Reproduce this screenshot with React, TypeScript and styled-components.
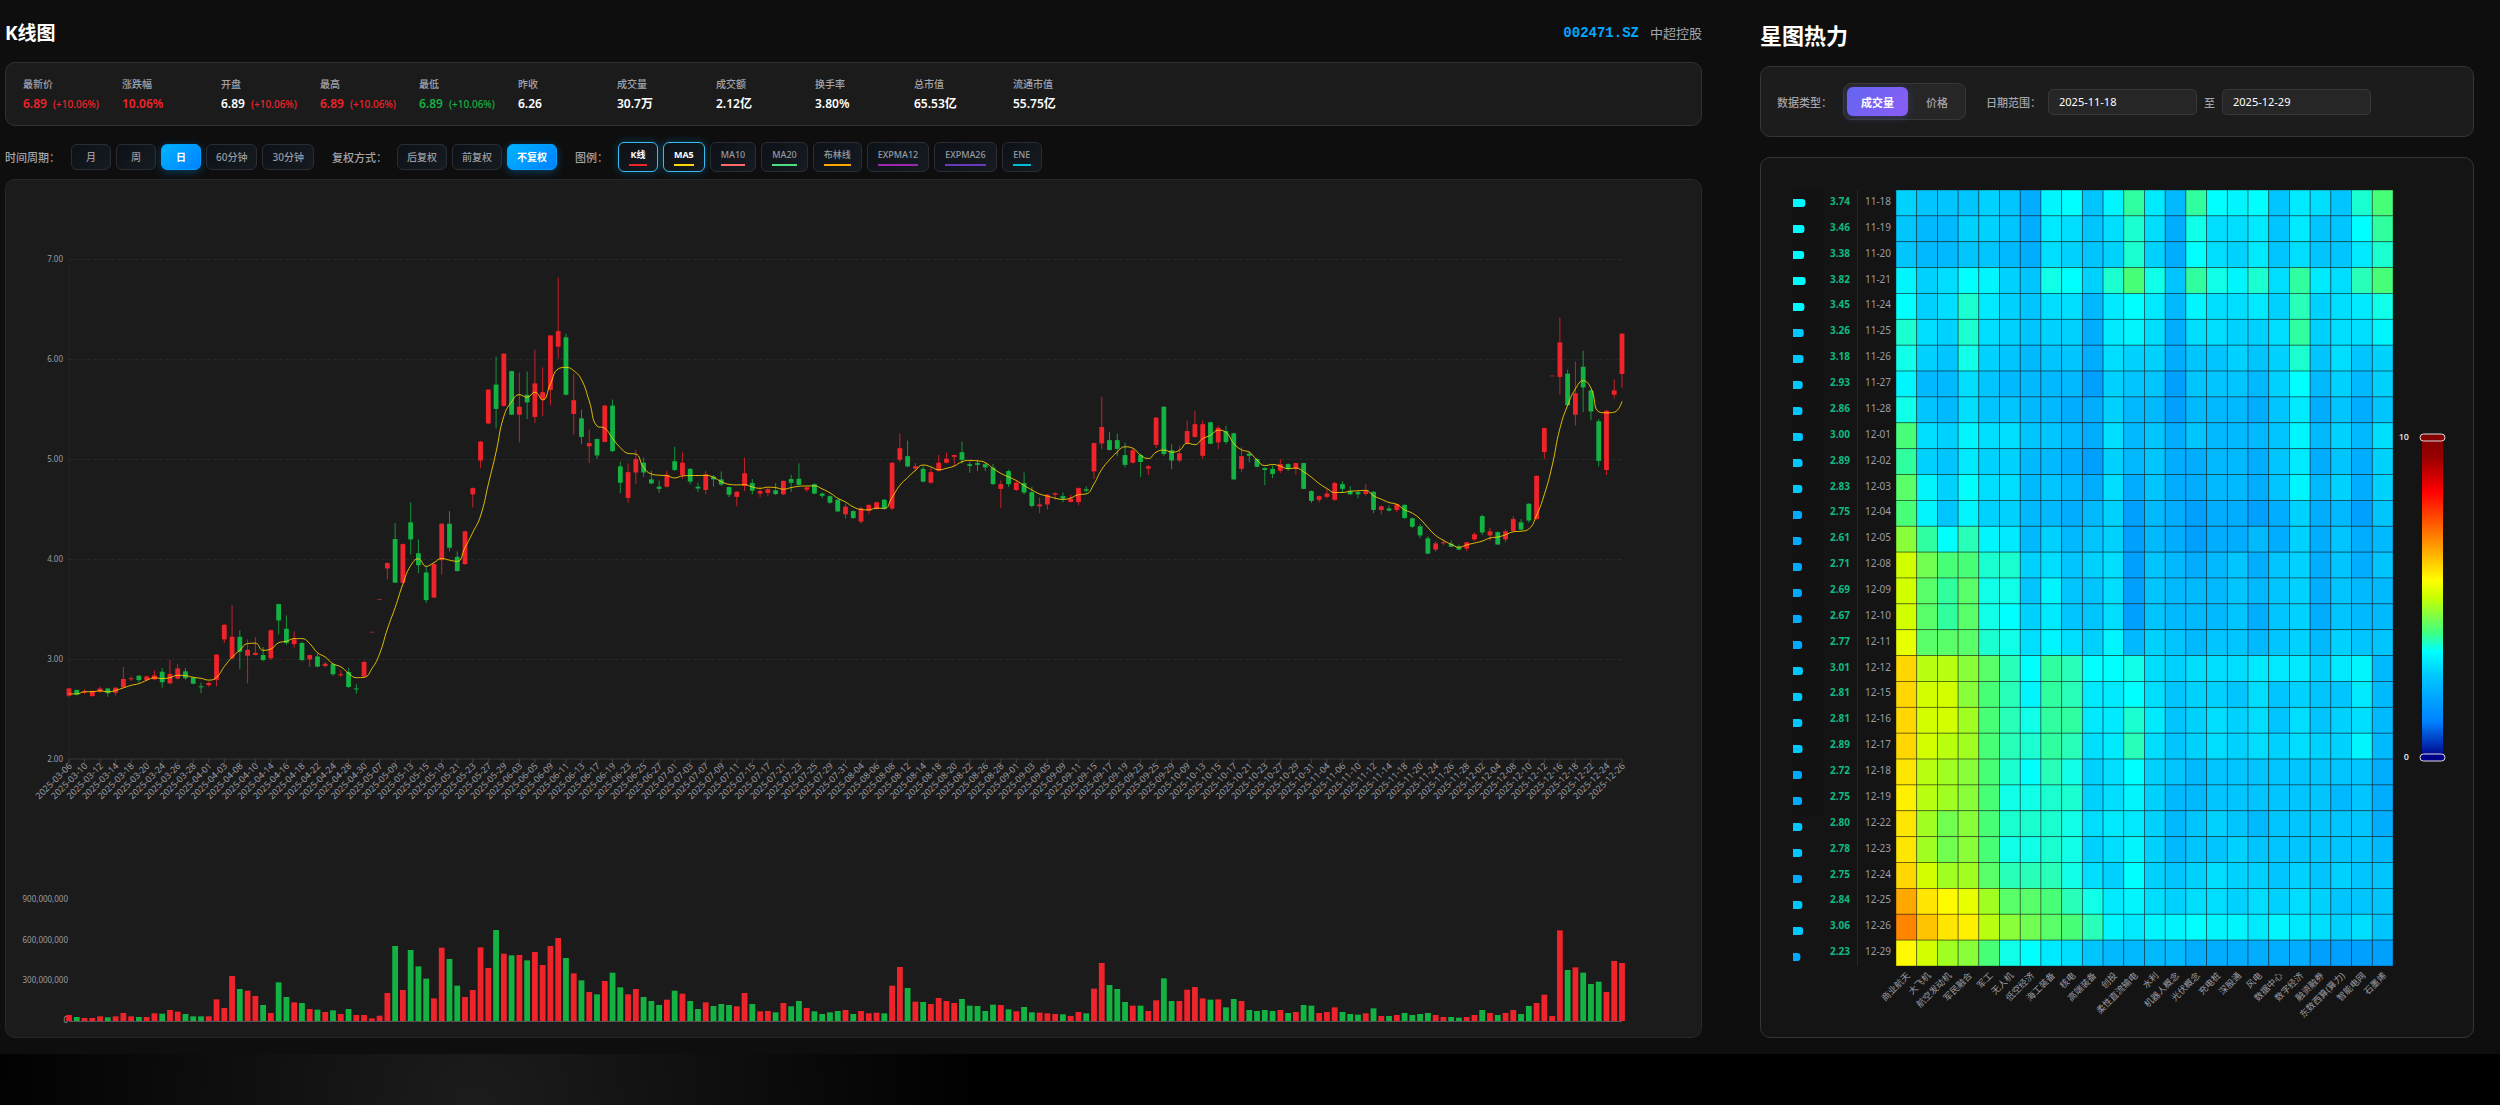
import React, { useState } from 'react';
import styled, { createGlobalStyle, css } from 'styled-components';

const SANS = '"Noto Sans", "Noto Sans CJK SC", sans-serif';
const UP = '#ef232a';
const DOWN = '#14b143';
const MUTED = '#a3a3aa';
const AXIS_TEXT = '#9c9ca2';

const GlobalStyle = createGlobalStyle`
  *, *::before, *::after { box-sizing: border-box; }
  body {
    margin: 0;
    min-height: 100vh;
    font-family: ${SANS};
    color: #fff;
    background: radial-gradient(circle 510px at 19% 100%, #1c1c1c, #000) #000;
  }
  button, input { font-family: inherit; }
`;

/* ---------- layout ---------- */

const Dashboard = styled.main`
  display: grid;
  grid-template-columns: minmax(0, 1697fr) minmax(0, 714fr);
  column-gap: 58px;
  padding: 0 26px 16px 5px;
  background: #0e0e0e;
`;

const Panel = styled.section`
  display: flex;
  flex-direction: column;
`;

const PanelHeader = styled.header<{ $height: number }>`
  display: flex;
  align-items: center;
  justify-content: space-between;
  height: ${p => p.$height}px;
  padding-top: 4px;
`;

const Title = styled.h1<{ $size: number }>`
  margin: 0;
  font-size: ${p => p.$size}px;
  line-height: 28px;
  font-weight: 700;
`;

const Stock = styled.div`
  display: flex;
  align-items: center;
  gap: 11px;
  font-size: 13px;
  line-height: 20px;
  color: ${MUTED};
`;

const StockCode = styled.span`
  font-family: "Liberation Mono", monospace;
  font-size: 14px;
  font-weight: 700;
  color: #00a8ff;
`;

const Card = styled.div<{ $border: string; $bg: string }>`
  border: 1px solid ${p => p.$border};
  border-radius: 10px;
  background: ${p => p.$bg};
`;

/* ---------- quote summary ---------- */

const StatsCard = styled(Card)`
  padding: 12px 17px 11px;
`;

const StatList = styled.dl`
  display: grid;
  grid-template-columns: repeat(11, 99px);
  margin: 0;
`;

const Stat = styled.div`
  display: flex;
  flex-direction: column;
  white-space: nowrap;
`;

const StatLabel = styled.dt`
  font-size: 10px;
  line-height: 19px;
  font-weight: 500;
  color: ${MUTED};
`;

const StatValue = styled.dd<{ $color: string }>`
  margin: 0;
  font-size: 12px;
  line-height: 19px;
  font-weight: 600;
  color: ${p => p.$color};
`;

const Change = styled.span<{ $color: string }>`
  margin-left: 6px;
  font-size: 10px;
  font-weight: 500;
  color: ${p => p.$color};
`;

/* ---------- toolbar ---------- */

const Toolbar = styled.div`
  display: flex;
  align-items: center;
  gap: 18px;
  height: 53px;
  padding-top: 12px;
  padding-bottom: 4px;
`;

const Group = styled.div`
  display: flex;
  align-items: center;
  gap: 5px;
`;

const GroupLabel = styled.span<{ $width: number }>`
  width: ${p => p.$width}px;
  font-size: 11px;
  font-weight: 500;
  color: ${MUTED};
  white-space: nowrap;
`;

const chip = css`
  border: 1px solid #2a2e34;
  border-radius: 6px;
  background: linear-gradient(135deg, #0d1117, #161b22);
  color: #989aa0;
  line-height: 14px;
  font-weight: 500;
  white-space: nowrap;
  cursor: pointer;
`;

const ChoiceButton = styled.button<{ $active: boolean }>`
  ${chip}
  min-width: 40px;
  height: 26px;
  padding: 0 9px;
  font-size: 10px;
  ${p => p.$active && css`
    border-color: #00a2ff;
    background: linear-gradient(135deg, #00b4ff, #0080ff);
    box-shadow: 0 2px 8px rgba(0, 150, 255, 0.35);
    color: #fff;
    font-weight: 700;
  `}
`;

const LegendButton = styled.button<{ $active: boolean }>`
  ${chip}
  display: flex;
  flex-direction: column;
  align-items: center;
  justify-content: center;
  gap: 2px;
  min-width: 40px;
  height: 30px;
  padding: 0 10px;
  font-size: 9px;
  ${p => p.$active && css`
    border-color: #38bdf0;
    box-shadow: 0 0 8px rgba(0, 180, 255, 0.3);
    color: #fff;
    font-weight: 700;
  `}
`;

const Swatch = styled.span<{ $color: string }>`
  width: 100%;
  min-width: 18px;
  height: 2px;
  background: ${p => p.$color};
`;

/* ---------- heat map controls ---------- */

const FilterCard = styled(Card)`
  display: flex;
  align-items: center;
  gap: 20px;
  padding: 16px;
  margin-bottom: 20px;
`;

const FilterLabel = styled.span`
  font-size: 11px;
  font-weight: 500;
  color: ${MUTED};
  white-space: nowrap;
`;

const Field = styled.div<{ $gap: number }>`
  display: flex;
  align-items: center;
  gap: ${p => p.$gap}px;
`;

const Segmented = styled.div`
  display: flex;
  gap: 4px;
  padding: 3px;
  border: 1px solid #383838;
  border-radius: 8px;
  background: #262626;
`;

const Segment = styled.button<{ $active: boolean }>`
  height: 29px;
  padding: 0 14px;
  border: 0;
  border-radius: 6px;
  background: transparent;
  color: ${MUTED};
  font-size: 11px;
  font-weight: 500;
  cursor: pointer;
  ${p => p.$active && css`
    background: linear-gradient(135deg, #6366f1, #8b5cf6);
    box-shadow: 0 2px 8px rgba(99, 102, 241, 0.3);
    color: #fff;
    font-weight: 700;
  `}
`;

const DateInput = styled.input`
  width: 149px;
  height: 26px;
  padding: 0 10px;
  border: 1px solid #383838;
  border-radius: 5px;
  background: #262626;
  color: #fff;
  font-size: 11px;
`;

const Chart = styled.svg`
  display: block;
  width: 100%;
  height: auto;
  font-family: ${SANS};
`;

/* ---------- price data ---------- */

// One session per entry: direction, high, body top, body bottom, low, volume.
// Prices count down in steps of 1/274.8 from 7.19; volume counts down from 484.
const SESSIONS = `
R 1233 1233 1253 1256 466|G 1237 1237 1250 1252 472|R 1235 1242 1244 1248 475|R 1238 1240 1254 1256 475
R 1228 1233 1242 1245 470|G 1233 1233 1246 1256 473|R 1229 1231 1245 1253 470|R 1174 1207 1230 1230 460
R 1200 1205 1206 1213 470|G 1197 1198 1210 1217 472|R 1197 1200 1210 1213 472|R 1183 1197 1208 1210 461
G 1177 1187 1216 1231 462|R 1155 1193 1219 1221 451|R 1166 1178 1206 1209 456|G 1177 1186 1205 1209 463
G 1202 1203 1220 1222 470|G 1217 1227 1229 1246 470|R 1214 1218 1224 1229 470|R 1138 1140 1209 1227 419
R 1056 1058 1098 1108 445|R 1004 1091 1150 1152 349|G 1073 1091 1132 1180 388|R 1098 1127 1143 1219 393
R 1092 1135 1141 1142 409|G 1119 1141 1155 1158 436|R 1071 1073 1150 1155 460|G 1000 1001 1046 1084 368
G 1032 1069 1108 1113 412|R 1076 1098 1111 1121 428|G 1105 1108 1155 1158 430|R 1140 1141 1153 1174 448
G 1137 1145 1173 1175 450|R 1160 1165 1171 1175 457|G 1163 1166 1194 1198 452|R 1183 1194 1197 1201 463
G 1177 1188 1229 1232 448|D 1221 1233 1235 1248 466|R 1158 1160 1200 1203 466|R 1077 1077 1078 1078 476
R 987 987 988 988 468|R 886 888 903 933 400|G 778 822 942 943 259|R 834 836 942 944 391
G 721 776 823 864 271|G 823 861 894 916 320|G 897 914 990 998 357|R 889 891 983 985 416
R 778 780 880 919 264|G 745 780 846 856 298|G 856 871 910 912 378|R 799 801 891 893 412
R 680 682 699 735 391|R 552 554 606 627 263|R 410 411 504 506 325|G 320 397 464 517 211
R 311 312 456 458 282|G 359 360 480 481 287|R 364 458 480 556 286|G 361 425 446 492 302
R 301 394 486 503 277|R 350 418 438 484 316|R 261 262 412 454 259|R 103 250 293 325 235
G 257 267 425 427 295|R 367 440 478 535 341|G 466 490 541 561 362|R 521 558 567 613 397
G 545 547 592 602 404|R 453 455 555 556 364|G 438 455 580 583 339|G 609 622 667 696 383
R 614 638 709 723 404|R 576 602 639 671 388|G 598 612 639 651 412|G 634 658 669 671 424
G 661 678 684 695 436|R 634 645 678 680 420|G 568 608 632 635 393|R 584 612 646 656 402
G 627 629 664 671 424|G 667 678 683 692 448|R 634 644 687 699 428|G 646 650 658 678 439
G 636 658 672 676 433|G 677 679 700 707 436|R 690 692 706 732 440|R 598 641 676 690 400
G 657 668 689 699 433|R 680 690 697 707 455|R 681 685 695 704 454|G 668 688 698 701 458
R 661 662 699 701 430|G 645 657 667 692 440|G 614 656 673 675 424|R 678 680 686 692 445
G 669 671 697 699 455|G 694 697 703 709 463|G 702 704 722 725 458|G 712 714 746 748 454
R 724 733 754 766 451|G 743 745 764 767 463|R 733 738 774 780 454|R 727 728 744 754 461
R 719 721 739 741 459|G 712 714 738 741 461|R 611 612 738 743 378|R 532 572 604 611 322
G 551 594 622 625 385|R 613 622 628 636 426|G 622 629 664 666 427|R 627 638 667 670 433
R 591 612 634 636 415|R 584 601 612 614 424|R 590 591 596 622 430|G 554 583 604 615 418
G 609 616 621 640 438|G 604 613 618 635 439|G 612 616 625 635 454|G 615 626 671 673 435
R 661 671 684 737 436|G 631 635 671 679 449|R 660 667 687 690 455|G 639 668 694 699 442
G 678 693 731 735 458|R 708 727 732 751 459|R 698 700 727 741 461|R 693 696 700 714 463
G 694 704 711 721 464|R 700 711 720 722 469|R 680 682 720 729 457|G 677 685 689 694 461
R 556 558 636 657 387|R 430 514 559 575 310|G 528 550 577 579 376|G 532 550 574 594 388
G 557 591 618 625 427|R 574 578 612 614 438|G 587 591 610 652 438|R 619 622 628 646 454
R 487 488 563 572 422|G 457 458 588 594 356|G 561 578 606 630 424|R 565 586 606 611 424
R 496 525 558 561 390|R 469 506 541 543 382|R 496 506 593 602 416|G 499 501 560 561 420
R 510 516 556 575 419|G 510 525 555 561 443|G 529 531 658 660 418|R 570 594 629 638 424
G 580 587 593 611 451|G 598 602 623 625 454|G 625 627 632 674 451|G 620 629 643 655 454
R 602 616 634 640 451|G 614 616 629 635 460|R 612 613 629 645 457|G 612 613 684 685 436
G 688 690 717 723 438|R 702 704 714 721 460|R 684 697 706 710 457|R 664 668 714 717 443
G 663 671 684 695 457|G 677 691 699 701 463|G 690 693 699 710 465|R 671 690 698 703 461
G 690 692 742 751 446|R 730 732 742 754 469|G 730 738 744 746 469|R 724 726 742 748 466
G 727 728 764 767 460|G 763 765 788 792 466|G 781 787 812 820 463|G 814 820 862 864 460
R 828 834 851 857 466|R 823 831 833 839 472|G 826 835 843 845 472|G 837 844 851 853 474
R 830 831 848 855 472|R 804 809 823 827 466|G 755 759 804 811 451|R 791 801 812 827 460
G 801 803 837 838 466|R 795 801 823 831 460|R 759 767 800 802 451|G 767 776 796 798 463
G 723 725 771 777 439|R 647 648 767 769 430|R 515 517 583 602 405|R 372 372 373 373 469
R 213 281 376 425 212|G 356 367 454 456 331|R 334 421 480 510 323|G 304 348 405 473 339
G 411 413 471 495 373|G 492 498 607 622 366|R 467 469 632 646 397|R 383 413 425 435 304
R 256 257 368 406 310`
  .trim()
  .split(/[|\n]/)
  .map(row => {
    const [kind, ...rest] = row.split(' ');
    const [high, top, bottom, low, volume] = rest.map(Number);
    return {
      color: kind === 'R' ? UP : DOWN,
      volumeColor: kind === 'G' ? DOWN : UP,
      close: kind === 'R' ? top : bottom,
      high, top, bottom, low,
      volume: (484 - volume) / 3,
    };
  });

const HOLIDAYS = [
  '04-04', '05-01', '05-02', '05-05', '06-02',
  '10-01', '10-02', '10-03', '10-06', '10-07', '10-08',
];

const TRADING_DAYS: string[] = [];
for (let t = Date.UTC(2025, 2, 6); t <= Date.UTC(2025, 11, 26); t += 86400000) {
  const day = new Date(t);
  const iso = day.toISOString().slice(0, 10);
  if (day.getUTCDay() % 6 !== 0 && !HOLIDAYS.includes(iso.slice(5))) TRADING_DAYS.push(iso);
}

const FIRST_X = 63;
const STEP_X = 1553 / 200;
const AXIS_END = FIRST_X + 1553;
const VOLUME_BASE = 841;
const sessionX = (i: number) => FIRST_X + i * STEP_X;
const priceY = (v: number) => 79.5 + (v - 53) / 2.751;

const MA_START = [1248, 1248, 1242, 1242];
const MA5 = SESSIONS.map((_, i) =>
  i < 4
    ? MA_START[i]
    : SESSIONS.slice(i - 4, i + 1).reduce((sum, s) => sum + s.close, 0) / 5,
).map((v, i) => [sessionX(i), priceY(v)] as const);

const clamp = (v: number, a: number, b: number) =>
  Math.min(Math.max(v, Math.min(a, b)), Math.max(a, b));

// Cubic curve whose control points never overshoot the neighbouring values.
function smoothPath(points: readonly (readonly [number, number])[]) {
  let d = `M${points[0][0]},${points[0][1]}`;
  let out: readonly [number, number] = points[0];
  for (let i = 1; i < points.length; i++) {
    const [px, py] = points[i - 1];
    const [x, y] = points[i];
    const next = points[i + 1];
    let cx = x, cy = y, nx = x, ny = y;
    if (next) {
      const before = Math.hypot(x - px, y - py);
      const after = Math.hypot(next[0] - x, next[1] - y);
      const share = after / (after + before);
      nx = clamp(x + (next[0] - px) * 0.5 * share, x, next[0]);
      ny = clamp(y + (next[1] - py) * 0.5 * share, y, next[1]);
      cx = clamp(x - ((nx - x) * before) / after, px, x);
      cy = clamp(y - ((ny - y) * before) / after, py, y);
      nx = x + ((x - cx) * after) / before;
      ny = y + ((y - cy) * after) / before;
    }
    d += `C${out[0].toFixed(1)},${out[1].toFixed(1)} ${cx.toFixed(1)},${cy.toFixed(1)} ${x.toFixed(1)},${y.toFixed(1)}`;
    out = [nx, ny];
  }
  return d;
}

const MA5_PATH = smoothPath(MA5);

function KLineChart() {
  return (
    <Chart viewBox="0 0 1695 857" role="img" aria-label="K线图">
      {[7, 6, 5, 4, 3, 2].map(price => {
        const y = Math.round(79 + (7 - price) * 99.9) + 0.5;
        return (
          <g key={price}>
            {price > 2 && (
              <line x1={FIRST_X} x2={AXIS_END} y1={y} y2={y} stroke="#282828" strokeDasharray="4 2" />
            )}
            <text x={57} y={y + 2} fontSize={8} textAnchor="end" fill={AXIS_TEXT}>
              {price.toFixed(2)}
            </text>
          </g>
        );
      })}
      <line x1={FIRST_X} x2={FIRST_X} y1={79} y2={579} stroke="#252525" />
      <line x1={FIRST_X} x2={AXIS_END} y1={579} y2={579} stroke="#383838" />
      {TRADING_DAYS.map((day, i) => {
        if (i % 2) return null;
        const x = sessionX(i);
        return (
          <g key={day}>
            <line x1={x} x2={x} y1={579} y2={583} stroke="#444" />
            <text
              fontSize={9}
              textAnchor="end"
              fill={AXIS_TEXT}
              transform={`translate(${x.toFixed(1)} 583) rotate(-45)`}
              dy={5}
            >
              {day}
            </text>
          </g>
        );
      })}
      {SESSIONS.map((s, i) => {
        const x = sessionX(i);
        const top = priceY(s.top);
        const bottom = priceY(s.bottom);
        return (
          <g key={i} fill={s.color}>
            <rect x={x - 0.5} y={priceY(s.high)} width={1} height={priceY(s.low) - priceY(s.high)} opacity={0.8} />
            <rect
              x={x - 2.4}
              y={top}
              width={4.8}
              height={Math.max(bottom - top, 1)}
              opacity={s.high === s.top && bottom - top < 1 ? 0.6 : 1}
            />
          </g>
        );
      })}
      <path d={MA5_PATH} fill="none" stroke="#ffd700" strokeWidth={1} opacity={0.85} />

      {['0', '300,000,000', '600,000,000', '900,000,000'].map((label, i) => (
        <text key={label} x={62} y={843 - i * 40.2} fontSize={8} textAnchor="end" fill={AXIS_TEXT}>
          {label}
        </text>
      ))}
      <line x1={FIRST_X} x2={AXIS_END} y1={841.5} y2={841.5} stroke="#55555a" />
      {SESSIONS.map((s, i) => (
        <rect
          key={i}
          x={sessionX(i) - 2.9}
          y={VOLUME_BASE - s.volume}
          width={5.8}
          height={s.volume}
          fill={s.volumeColor}
        />
      ))}
    </Chart>
  );
}

/* ---------- heat map data ---------- */

// Colour ramp from cool to hot; each cell below names one step of it.
const STEPS = '0123456789abcdefghijklmnopqr';
const RAMP = [
  '#00a0ff', '#00adff', '#00b9ff', '#00c5ff', '#00d2ff', '#00deff', '#00eaff',
  '#00f5ff', '#00ffff', '#10ffe8', '#1affd0', '#28ffb8', '#30ffa0', '#48ff78',
  '#58ff68', '#70ff50', '#88ff38', '#a0ff20', '#b8ff10', '#d2ff00', '#e8ff00',
  '#fffa00', '#fff000', '#ffe600', '#ffd600', '#ffc400', '#ffa800', '#ff8400',
];

const HEAT_ROWS: [string, number, string][] = [
  ['11-18', 3.74, '433343178' + '37c62c878' + '3653ad'],
  ['11-19', 3.46, '322443165' + '35a519556' + '36338c'],
  ['11-20', 3.38, '322332154' + '34a418546' + '35336a'],
  ['11-21', 3.82, '745874398' + '4ad93c97a' + '5c65bd'],
  ['11-24', 3.45, '845a64355' + '268627556' + '4b4569'],
  ['11-25', 3.26, 'a54a54344' + '167515544' + '5c4557'],
  ['11-26', 3.18, '943943233' + '154413343' + '4a3534'],
  ['11-27', 2.93, '722532222' + '043303332' + '482424'],
  ['11-28', 2.86, '932533221' + '142202221' + '361313'],
  ['12-01', 3.0, 'd54755332' + '152313222' + '372425'],
  ['12-02', 2.89, 'c43644221' + '042311221' + '361314'],
  ['12-03', 2.83, 'e74855232' + '151311221' + '372414'],
  ['12-04', 2.75, 'd73744221' + '240210110' + '141203'],
  ['12-05', 2.61, 'gc8b76242' + '340210112' + '141312'],
  ['12-08', 2.71, 'jfddaa453' + '450321231' + '341313'],
  ['12-09', 2.69, 'jece99373' + '350322232' + '341322'],
  ['12-10', 2.67, 'jece98463' + '350322231' + '341322'],
  ['12-11', 2.77, 'keeea9575' + '472432332' + '342433'],
  ['12-12', 3.01, 'oiigeb8cb' + '889545556' + '664672'],
  ['12-15', 2.81, 'ojjgdb7cb' + '668534435' + '343362'],
  ['12-16', 2.81, 'ojjhdb9cc' + '66a634545' + '353452'],
  ['12-17', 2.89, 'ojihdbacb' + '56b534545' + '454472'],
  ['12-18', 2.72, 'nihgda8b9' + '458432333' + '333331'],
  ['12-19', 2.75, 'mihgd99aa' + '457422333' + '333231'],
  ['12-22', 2.8, 'nhfgdaaa9' + '566423432' + '333331'],
  ['12-23', 2.78, 'nhfgd99a9' + '457423343' + '333332'],
  ['12-24', 2.75, 'ojhhebbb9' + '548434544' + '343433'],
  ['12-25', 2.84, 'qnlkheedb' + '967545545' + '454333'],
  ['12-26', 3.06, 'rpnmigfed' + 'b76778776' + '765453'],
  ['12-29', 2.23, 'ljhgd9865' + '322221111' + '110000'],
];

const SECTORS = [
  '商业航天', '大飞机', '航空发动机', '军民融合', '军工', '无人机', '低空经济', '海工装备',
  '核电', '高端装备', '创投', '柔性直流输电', '水利', '机器人概念', '光伏概念', '充电桩',
  '深股通', '风电', '数据中心', '数字经济', '融资融券', '东数西算(算力)', '智能电网', '石墨烯',
];

const GRID_X = 135;
const GRID_Y = 32;
const CELL_W = 497 / 24;
const CELL_H = 776 / 30;

const gaugeColor = (v: number) => (v > 3.33 ? '#00f8ff' : v > 2.775 ? '#00c8ff' : '#00aaff');

const SCALE_STOPS: [number, string][] = [
  [0, '#850000'], [0.06, '#980000'], [0.17, '#ff0000'], [0.35, '#ffa500'], [0.447, '#ffff00'],
  [0.5, '#c8ff00'], [0.61, '#40ff80'], [0.67, '#00ffff'], [0.745, '#00c8ff'],
  [0.89, '#0080ff'], [1, '#000088'],
];

function HeatMap() {
  return (
    <Chart viewBox="0 0 712 879" role="img" aria-label="星图热力">
      <defs>
        <linearGradient id="heat-scale" x1="0" y1="0" x2="0" y2="1">
          {SCALE_STOPS.map(([offset, color]) => (
            <stop key={offset} offset={offset} stopColor={color} />
          ))}
        </linearGradient>
      </defs>
      <rect x={32} y={31} width={31} height={626} fill="#121212" />
      <line x1={96.5} x2={96.5} y1={GRID_Y} y2={808} stroke="#262626" />
      {HEAT_ROWS.map(([date, average, cells], row) => {
        const y = GRID_Y + row * CELL_H;
        const gaugeY = 41 + row * 26;
        const w = average * 3.3;
        return (
          <g key={date}>
            <path
              d={`M32,${gaugeY}h${w - 3}q3,0 3,3v2q0,3 -3,3h${3 - w}z`}
              fill={gaugeColor(average)}
            />
            <text x={79} y={y + 15} fontSize={10} fontWeight={700} textAnchor="middle" fill="#10b981">
              {average.toFixed(2)}
            </text>
            <text x={117} y={y + 15} fontSize={10} textAnchor="middle" fill={AXIS_TEXT}>
              {date}
            </text>
            {[...cells].map((step, col) => (
              <rect
                key={col}
                x={GRID_X + col * CELL_W}
                y={y}
                width={CELL_W}
                height={CELL_H}
                fill={RAMP[STEPS.indexOf(step)]}
                stroke="#1a1a1a"
                strokeOpacity={0.5}
                strokeWidth={0.8}
              />
            ))}
          </g>
        );
      })}
      {SECTORS.map((name, i) => (
        <text
          key={name}
          fontSize={9}
          textAnchor="end"
          fill={AXIS_TEXT}
          transform={`translate(${(GRID_X + (i + 0.5) * CELL_W).toFixed(1)} 814) rotate(-45)`}
          dy={6}
        >
          {name}
        </text>
      ))}
      <rect x={661} y={280} width={21} height={319} fill="url(#heat-scale)" />
      <rect x={659} y={276} width={25} height={7} rx={3.5} fill="#850000" stroke="#ddd" />
      <rect x={659} y={596} width={25} height={7} rx={3.5} fill="#000088" stroke="#ddd" />
      <text x={648} y={282} fontSize={9} fontWeight={600} textAnchor="end" fill="#ddd">10</text>
      <text x={648} y={602} fontSize={9} fontWeight={600} textAnchor="end" fill="#ddd">0</text>
    </Chart>
  );
}

/* ---------- page ---------- */

type StatItem = { label: string; value: string; color?: string; change?: string; changeColor?: string };

const STATS: StatItem[] = [
  { label: '最新价', value: '6.89', color: UP, change: '(+10.06%)', changeColor: UP },
  { label: '涨跌幅', value: '10.06%', color: UP },
  { label: '开盘', value: '6.89', change: '(+10.06%)', changeColor: UP },
  { label: '最高', value: '6.89', color: UP, change: '(+10.06%)', changeColor: UP },
  { label: '最低', value: '6.89', color: DOWN, change: '(+10.06%)', changeColor: DOWN },
  { label: '昨收', value: '6.26' },
  { label: '成交量', value: '30.7万' },
  { label: '成交额', value: '2.12亿' },
  { label: '换手率', value: '3.80%' },
  { label: '总市值', value: '65.53亿' },
  { label: '流通市值', value: '55.75亿' },
];

const PERIODS = ['月', '周', '日', '60分钟', '30分钟'];
const ADJUSTMENTS = ['后复权', '前复权', '不复权'];
const LEGEND: [string, string][] = [
  ['K线', UP], ['MA5', '#ffd700'], ['MA10', '#ff6b6b'], ['MA20', '#4ade80'], ['布林线', '#ffa500'],
  ['EXPMA12', '#9c27b0'], ['EXPMA26', '#673ab7'], ['ENE', '#00bcd4'],
];

export default function App() {
  const [period, setPeriod] = useState('日');
  const [adjustment, setAdjustment] = useState('不复权');
  const [series, setSeries] = useState(['K线', 'MA5']);
  const [metric, setMetric] = useState('成交量');

  const toggle = (name: string) =>
    setSeries(list => (list.includes(name) ? list.filter(n => n !== name) : [...list, name]));

  return (
    <>
      <GlobalStyle />
      <Dashboard>
        <Panel>
          <PanelHeader $height={62}>
            <Title $size={19}>K线图</Title>
            <Stock>
              <StockCode>002471.SZ</StockCode>
              <span>中超控股</span>
            </Stock>
          </PanelHeader>
          <StatsCard $border="#2d323a" $bg="#1b1b1b">
            <StatList>
              {STATS.map(s => (
                <Stat key={s.label}>
                  <StatLabel>{s.label}</StatLabel>
                  <StatValue $color={s.color ?? '#fff'}>
                    {s.value}
                    {s.change && <Change $color={s.changeColor ?? '#fff'}>{s.change}</Change>}
                  </StatValue>
                </Stat>
              ))}
            </StatList>
          </StatsCard>
          <Toolbar>
            <Group role="group" aria-label="时间周期">
              <GroupLabel $width={61}>时间周期：</GroupLabel>
              {PERIODS.map(name => (
                <ChoiceButton key={name} $active={name === period} onClick={() => setPeriod(name)}>
                  {name}
                </ChoiceButton>
              ))}
            </Group>
            <Group role="group" aria-label="复权方式">
              <GroupLabel $width={60}>复权方式：</GroupLabel>
              {ADJUSTMENTS.map(name => (
                <ChoiceButton key={name} $active={name === adjustment} onClick={() => setAdjustment(name)}>
                  {name}
                </ChoiceButton>
              ))}
            </Group>
            <Group role="group" aria-label="图例">
              <GroupLabel $width={38}>图例：</GroupLabel>
              {LEGEND.map(([name, color]) => (
                <LegendButton key={name} $active={series.includes(name)} onClick={() => toggle(name)}>
                  {name}
                  <Swatch $color={color} />
                </LegendButton>
              ))}
            </Group>
          </Toolbar>
          <Card $border="#282828" $bg="#1b1b1b">
            <KLineChart />
          </Card>
        </Panel>

        <Panel>
          <PanelHeader $height={66}>
            <Title $size={22}>星图热力</Title>
          </PanelHeader>
          <FilterCard $border="#353535" $bg="#1c1c1c">
            <Field $gap={11}>
              <FilterLabel>数据类型：</FilterLabel>
              <Segmented role="group" aria-label="数据类型">
                {['成交量', '价格'].map(name => (
                  <Segment key={name} $active={name === metric} onClick={() => setMetric(name)}>
                    {name}
                  </Segment>
                ))}
              </Segmented>
            </Field>
            <Field $gap={7}>
              <FilterLabel as="label" htmlFor="start-date">日期范围：</FilterLabel>
              <DateInput id="start-date" defaultValue="2025-11-18" />
              <FilterLabel as="label" htmlFor="end-date">至</FilterLabel>
              <DateInput id="end-date" defaultValue="2025-12-29" />
            </Field>
          </FilterCard>
          <Card $border="#353535" $bg="#141414">
            <HeatMap />
          </Card>
        </Panel>
      </Dashboard>
    </>
  );
}
